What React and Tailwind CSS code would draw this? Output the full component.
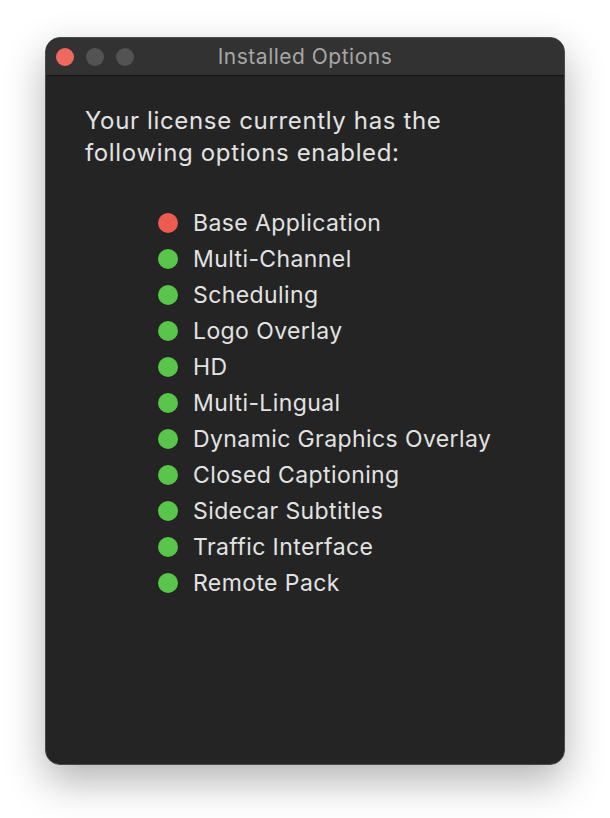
export default function App() {
  const items = [
    ["Base Application", "red"],
    ["Multi-Channel", "green"],
    ["Scheduling", "green"],
    ["Logo Overlay", "green"],
    ["HD", "green"],
    ["Multi-Lingual", "green"],
    ["Dynamic Graphics Overlay", "green"],
    ["Closed Captioning", "green"],
    ["Sidecar Subtitles", "green"],
    ["Traffic Interface", "green"],
    ["Remote Pack", "green"],
  ];
  return (
    <div className="w-[610px] h-[818px] bg-white pt-[37px] pl-[45px]" style={{ fontFamily: "Inter, 'Noto Sans', sans-serif" }}>
      <div className="w-[520px] h-[728px] rounded-[15px] bg-[#242424] border border-[#4a4a4a] shadow-[0_16px_40px_rgba(0,0,0,0.3)] overflow-hidden flex flex-col">
        <div className="h-[38px] bg-[#323232] border-b border-[#141414] flex items-center relative shrink-0">
          <div className="flex items-center gap-[12px] pl-[10px]">
            <div className="w-[18px] h-[18px] rounded-full bg-[#ee6a5e]" />
            <div className="w-[18px] h-[18px] rounded-full bg-[#535353]" />
            <div className="w-[18px] h-[18px] rounded-full bg-[#535353]" />
          </div>
          <div className="absolute inset-0 flex items-center justify-center text-[21px] tracking-[0.5px] text-[#a6a6a6] pointer-events-none">
            Installed Options
          </div>
        </div>
        <div className="pl-[39px] pt-[29px]">
          <p className="text-[24px] tracking-[0.65px] leading-[32px] text-[#e2e2e2]">
            Your license currently has the<br />following options enabled:
          </p>
          <div className="mt-[36px] pl-[73px] flex flex-col">
            {items.map(([label, c]) => (
              <div key={label} className="h-[36px] flex items-center">
                <div className={c === "red" ? "w-[20px] h-[20px] rounded-full bg-[#ec5b52]" : "w-[20px] h-[20px] rounded-full bg-[#5ac54c]"} />
                <span className="ml-[15px] text-[23px] tracking-[0.4px] text-[#e2e2e2]">{label}</span>
              </div>
            ))}
          </div>
        </div>
      </div>
    </div>
  );
}
